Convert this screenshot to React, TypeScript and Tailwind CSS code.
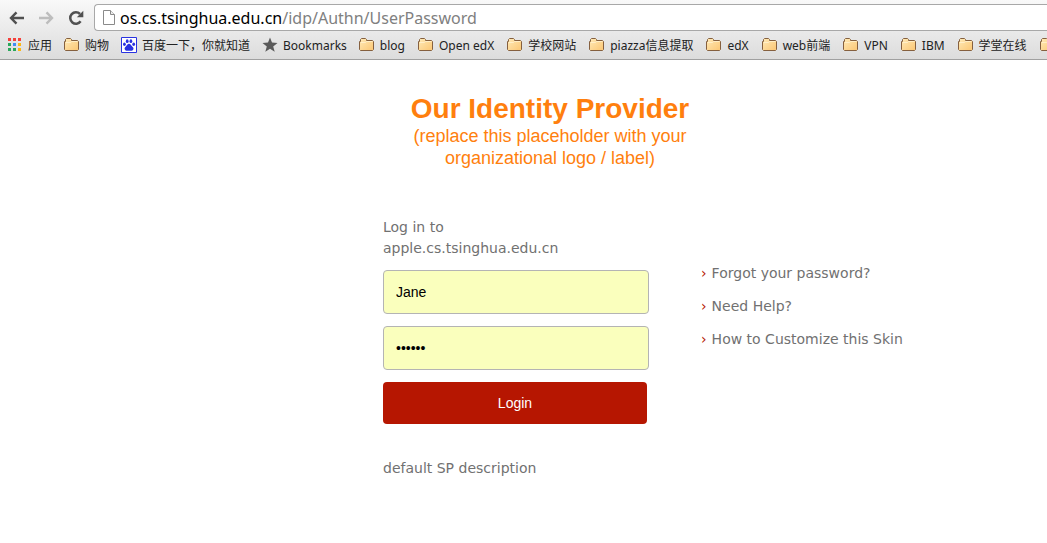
import type { ReactNode } from "react";

const FolderIcon = () => (
  <svg className="h-4 w-4 shrink-0" viewBox="0 0 16 16" aria-hidden="true">
    <defs>
      <linearGradient id="folder" x1="0" y1="0" x2="1" y2="1">
        <stop offset="0" stopColor="#ffeab8" />
        <stop offset="1" stopColor="#fbc673" />
      </linearGradient>
    </defs>
    <path
      d="M.5 12.500V4.500h1v-2l1-1h4l1 1v1h6l1 1v8l-1 1h-12z"
      fill="url(#folder)"
      stroke="#85603f"
      strokeLinejoin="round"
    />
    <path d="M2 5.500h4.500l1-1h6" fill="none" stroke="#fff3d2" strokeWidth=".8" />
  </svg>
);

const AppsIcon = () => (
  <svg className="h-4 w-4 shrink-0" viewBox="0 0 16 16" shapeRendering="crispEdges" aria-hidden="true">
    <path d="M1 1h3v3H1zM6 1h3v3H6zM11 1h3v3h-3z" fill="#f5403a" />
    <path d="M1 6h3v3H1zM1 11h3v3H1z" fill="#2aa85b" />
    <path d="M6 11h3v3H6z" fill="#2aa85b" />
    <path d="M6 6h3v3H6z" fill="#3f8df5" />
    <path d="M11 6h3v3h-3zM11 11h3v3h-3z" fill="#fcb614" />
  </svg>
);

const PawIcon = () => (
  <svg className="h-4 w-4 shrink-0" viewBox="0 0 16 16" aria-hidden="true">
    <path d="M.5.5h15v15H.5z" fill="#fff" stroke="#2932e1" />
    <g fill="#2932e1">
      <ellipse cx="3.400" cy="7.300" rx="1.400" ry="1.800" />
      <ellipse cx="6.200" cy="4.200" rx="1.400" ry="1.900" />
      <ellipse cx="9.900" cy="4.200" rx="1.400" ry="1.900" />
      <ellipse cx="12.700" cy="7.200" rx="1.400" ry="1.800" />
      <path d="M8 6.800c1.600 0 2 1.600 3.200 2.700 1.300 1.100 1.600 2 1.100 3.100-.8 1.700-2.500 1.100-4.300 1.100s-3.400.6-4.200-1.100c-.5-1.100-.2-2 1-3.100C6 8.400 6.400 6.800 8 6.800z" />
    </g>
  </svg>
);

const StarIcon = () => (
  <svg className="h-4 w-4 shrink-0" viewBox="0 0 16 16" aria-hidden="true">
    <path d="M8 .5l2 5.100 5.500.3-4.300 3.500 1.500 5.400L8 11.800l-4.700 3 1.500-5.400L.5 5.900 6 5.600z" fill="#5a5a5a" />
  </svg>
);

const PageIcon = () => (
  <svg className="h-4 w-3 shrink-0" viewBox="0 0 12 16" aria-hidden="true">
    <path d="M.5.5h7l4 4v10H.5z" fill="#fff" stroke="#8a8a8a" />
    <path d="M7.500.5v4h4" fill="#eee" stroke="#8a8a8a" />
  </svg>
);

const ArrowIcon = ({ back = false }: { back?: boolean }) => (
  <svg className="h-4 w-4" viewBox="0 0 16 16" fill="none" stroke="currentColor" strokeWidth="2.400" aria-hidden="true">
    {back ? <path d="M8.500 2.300L3 8l5.500 5.700M3 8h13" /> : <path d="M8.500 2.300L14 8l-5.500 5.700M14 8H1" />}
  </svg>
);

const ReloadIcon = () => (
  <svg className="h-4 w-4" viewBox="0 0 16 16" aria-hidden="true">
    <path d="M12.600 11.300A5.700 5.700 0 1 1 12 4" fill="none" stroke="#505050" strokeWidth="2.500" />
    <path d="M15.300.8v6.400H8.800z" fill="#505050" />
  </svg>
);

const sites: { label: string; icon?: ReactNode }[] = [
  { label: "应用", icon: <AppsIcon /> },
  { label: "购物" },
  { label: "百度一下，你就知道", icon: <PawIcon /> },
  { label: "Bookmarks", icon: <StarIcon /> },
];

const folders = [
  "blog",
  "Open edX",
  "学校网站",
  "piazza信息提取",
  "edX",
  "web前端",
  "VPN",
  "IBM",
  "学堂在线",
  "",
];

const helpLinks = ["Forgot your password?", "Need Help?", "How to Customize this Skin"];

function Bookmark({ label, icon }: { label: string; icon?: ReactNode }) {
  return (
    <a href="#" aria-label={label || "Folder"} className="flex shrink-0 items-center gap-[5px] whitespace-nowrap">
      {icon ?? <FolderIcon />}
      <span className="pt-0.5">{label}</span>
    </a>
  );
}

function BrowserBar() {
  return (
    <header className="overflow-hidden border-b border-[#a0a0a0] bg-linear-to-b from-[#f9f9f9] to-[#dcdcdc] pt-1 font-['Noto_Sans','Noto_Sans_CJK_SC',sans-serif]">
      <div className="flex items-center pl-2">
        <div className="flex items-center gap-3.5">
          <button aria-label="Back" className="text-[#505050]"><ArrowIcon back /></button>
          <button aria-label="Forward" className="text-[#bdbdbd]"><ArrowIcon /></button>
          <button aria-label="Reload"><ReloadIcon /></button>
        </div>
        <div className="ml-2.5 flex h-[27px] flex-1 items-center gap-[5px] rounded-l-sm border border-r-0 border-[#a8a8a8] bg-white pl-2">
          <PageIcon />
          <span className="text-base leading-6 whitespace-nowrap text-black">
            os.cs.tsinghua.edu.cn<span className="text-[#808080]">/idp/Authn/UserPassword</span>
          </span>
        </div>
      </div>
      <nav aria-label="Bookmarks" className="flex h-7 items-center gap-3 pl-[7px] text-xs text-[#222]">
        <div className="flex shrink-0 gap-3">
          {sites.map((s) => (
            <Bookmark key={s.label} label={s.label} icon={s.icon} />
          ))}
        </div>
        <div className="flex shrink-0 gap-[13px]">
          {folders.map((label) => (
            <Bookmark key={label} label={label} />
          ))}
        </div>
      </nav>
    </header>
  );
}

export default function App() {
  return (
    <div className="min-h-screen bg-white">
      <BrowserBar />
      <main className="flex justify-center pt-[33px] pl-[243px] font-['DejaVu_Sans',sans-serif] text-sm leading-[21px] text-[#717171]">
        <div className="w-full max-w-[524px]">
          <div className="w-[334px] text-center font-['Liberation_Sans',sans-serif] text-[#ff7f0e]">
            <h1 className="text-[28px] leading-8 font-bold">Our Identity Provider</h1>
            <p className="text-lg leading-[22px]">
              (replace this placeholder with your
              <br />
              organizational logo / label)
            </p>
          </div>
          <div className="mt-12 flex justify-between">
            <form className="w-[266px]" onSubmit={(e) => e.preventDefault()}>
              <p className="mb-[11px]">
                Log in to
                <br />
                apple.cs.tsinghua.edu.cn
              </p>
              <input
                aria-label="Username"
                defaultValue="Jane"
                className="mb-3 block h-11 w-full rounded border border-[#b4b4b4] bg-[#faffbd] px-3 font-['Liberation_Sans',sans-serif] text-black"
              />
              <input
                aria-label="Password"
                type="password"
                defaultValue="secret"
                className="mb-3 block h-11 w-full rounded border border-[#b4b4b4] bg-[#faffbd] px-3 font-['Liberation_Sans',sans-serif] text-black"
              />
              <button className="block h-[42px] w-[264px] rounded bg-[#b61601] font-['Liberation_Sans',sans-serif] text-white">
                Login
              </button>
            </form>
            <ul className="mt-[46px] w-[206px] space-y-3">
              {helpLinks.map((text) => (
                <li key={text}>
                  <a href="#" className="flex gap-[5px] whitespace-nowrap">
                    <span aria-hidden="true" className="text-[#b61601]">›</span>
                    {text}
                  </a>
                </li>
              ))}
            </ul>
          </div>
          <p className="mt-[34px]">default SP description</p>
        </div>
      </main>
    </div>
  );
}
